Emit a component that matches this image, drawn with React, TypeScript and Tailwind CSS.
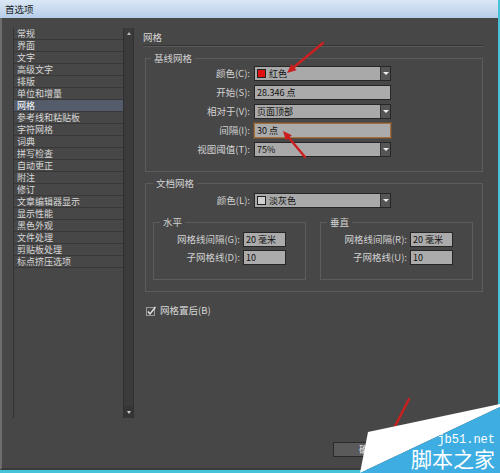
import type { ReactNode } from 'react';

// 左侧分类列表
const NAV_ITEMS = [
  '常规', '界面', '文字', '高级文字', '排版', '单位和增量', '网格',
  '参考线和粘贴板', '字符网格', '词典', '拼写检查', '自动更正', '附注', '修订',
  '文章编辑器显示', '显示性能', '黑色外观', '文件处理', '剪贴板处理', '标点挤压选项',
];
const ACTIVE = '网格';

// 下拉框
const Select = ({ children }: { children: ReactNode }) => (
  <div className="flex h-[15px] w-[137px] border border-[#262626] bg-[#a9a9a9]">
    <div className="flex flex-1 items-center gap-[3px] pl-[2px] text-[9px] leading-none text-[#111]">{children}</div>
    <div className="flex w-[10px] items-center justify-center border-l border-[#333] bg-[#555]">
      <span className="border-x-[3px] border-t-[3px] border-x-transparent border-t-[#eee]" />
    </div>
  </div>
);

// 文本输入框
const Input = ({ value, width = 'w-[137px]', focus = false }: { value: string; width?: string; focus?: boolean }) => (
  <div
    className={`flex h-[15px] ${width} items-center pl-[2px] text-[9px] leading-none text-[#111] ${
      focus ? 'border border-[#a07040] bg-[#ababab] shadow-[0_0_0_1px_#6b5038]' : 'border border-[#262626] bg-[#ababab]'
    }`}
  >
    {value}
  </div>
);

const Swatch = ({ color }: { color: string }) => (
  <span className={`inline-block h-[9px] w-[9px] border border-[#222] ${color}`} />
);

const Row = ({ label, children }: { label: string; children: ReactNode }) => (
  <div className="grid h-[15px] grid-cols-[104px_137px] items-center gap-x-[4px]">
    <span className="text-right text-[9.5px] leading-none text-[#d2d2d2]">{label}</span>
    {children}
  </div>
);

const SubRow = ({ label, value }: { label: string; value: string }) => (
  <div className="grid h-[15px] grid-cols-[86px_43px] items-center gap-x-[3px]">
    <span className="text-right text-[9.5px] leading-none text-[#d2d2d2]">{label}</span>
    <Input value={value} width="w-[43px]" />
  </div>
);

const SubBox = ({ title, rows }: { title: string; rows: [string, string][] }) => (
  <fieldset className="w-[153px] min-w-0 border border-[#5c5c5c]">
    <legend className="ml-[6px] px-[3px] text-[9.5px] leading-[12px] text-[#d2d2d2]">{title}</legend>
    <div className="flex flex-col gap-[3px] pb-[14px] pt-[4px]">
      {rows.map(([l, v]) => (
        <SubRow key={l} label={l} value={v} />
      ))}
    </div>
  </fieldset>
);

const NavList = () => (
  <div className="flex h-[390px] w-[121px] border-l border-[#333]">
    <ul className="w-[109px]">
      {NAV_ITEMS.map((name) => (
        <li
          key={name}
          className={`flex h-[12px] items-center border-b border-[#383838] pl-[3px] text-[9px] leading-none ${
            name === ACTIVE ? 'bg-[#545c6c] text-white' : 'text-[#d8d8d8]'
          }`}
        >
          {name}
        </li>
      ))}
    </ul>
    <div className="flex w-[11px] flex-col justify-between border-x border-[#303030] bg-[#3b3b3b]">
      <div className="flex h-[11px] items-center justify-center">
        <span className="border-x-[2.5px] border-b-[3px] border-x-transparent border-b-[#bbb]" />
      </div>
      <div className="flex h-[12px] items-center justify-center bg-[#353535]">
        <span className="border-x-[2.5px] border-t-[3px] border-x-transparent border-t-[#ccc]" />
      </div>
    </div>
  </div>
);

export default function App() {
  return (
    <div className="relative h-[473px] w-[500px] overflow-hidden bg-[#474747] font-['Noto_Sans_CJK_SC','Noto_Sans',sans-serif]">
      <div className="flex h-full w-full flex-col border-b-[3px] border-r-[2px] border-[#44c3da]">
        {/* 标题栏 */}
        <div className="h-[18px] shrink-0 bg-gradient-to-b from-[#dbe8f6] to-[#b6cde8] pl-[5px] text-[9.5px] leading-[18px] text-[#1d1d1d]">
          首选项
        </div>

        <div className="flex flex-1 border-b-2 border-l-2 border-b-[#3a3a3a] border-l-[#6e6e6e]">
          <div className="pl-[11px] pt-[10px]">
            <NavList />
          </div>

          <div className="ml-[9px] flex w-[340px] flex-col">
            <div className="mt-[11px] h-[17px] border-b border-[#353535] text-[9.5px] leading-[16px] text-[#d8d8d8] shadow-[0_1px_0_#5a5a5a]">
              网格
            </div>

            {/* 基线网格 */}
            <fieldset className="ml-[2px] mt-[6px] w-[338px] min-w-0 border border-[#5c5c5c]">
              <legend className="ml-[5px] px-[3px] text-[9.5px] leading-[12px] text-[#d2d2d2]">基线网格</legend>
              <div className="flex flex-col gap-[4px] pb-[14px] pt-[2px]">
                <Row label="颜色(C):">
                  <Select>
                    <Swatch color="bg-[#e01010]" />
                    <span>红色</span>
                  </Select>
                </Row>
                <Row label="开始(S):">
                  <Input value="28.346 点" />
                </Row>
                <Row label="相对于(V):">
                  <Select>页面顶部</Select>
                </Row>
                <Row label="间隔(I):">
                  <Input value="30 点" focus />
                </Row>
                <Row label="视图阈值(T):">
                  <Select>75%</Select>
                </Row>
              </div>
            </fieldset>

            {/* 文档网格 */}
            <fieldset className="ml-[2px] mt-[5px] w-[338px] min-w-0 border border-[#5c5c5c]">
              <legend className="ml-[7px] px-[3px] text-[9.5px] leading-[12px] text-[#d2d2d2]">文档网格</legend>
              <div className="pt-[4px]">
                <Row label="颜色(L):">
                  <Select>
                    <Swatch color="bg-[#d0d0d0]" />
                    <span>淡灰色</span>
                  </Select>
                </Row>
              </div>
              <div className="ml-[7px] mt-[8px] flex gap-[14px] pb-[11px]">
                <SubBox title="水平" rows={[['网格线间隔(G):', '20 毫米'], ['子网格线(D):', '10']]} />
                <SubBox title="垂直" rows={[['网格线间隔(R):', '20 毫米'], ['子网格线(U):', '10']]} />
              </div>
            </fieldset>

            <label className="ml-[3px] mt-[13px] flex h-[12px] items-center gap-[3px] text-[9.5px] leading-none text-[#d8d8d8]">
              <svg width="11" height="11" viewBox="0 0 11 11">
                <rect x="0.5" y="1.5" width="8" height="8" fill="#4a4a4a" stroke="#9a9a9a" />
                <path d="M2 5.5 L4 8 L9.5 1" fill="none" stroke="#e8e8e8" strokeWidth="1.3" />
              </svg>
              网格置后(B)
            </label>

            <div className="mb-[11px] ml-[190px] mt-auto flex">
              <button className="h-[15px] w-[71px] border border-[#2a2a2a] bg-[#5a5a5a] text-[9.5px] leading-none text-[#e6e6e6]">确定</button>
            </div>
          </div>
        </div>
      </div>

      {/* 标注箭头与水印 */}
      <svg className="pointer-events-none absolute inset-0" width="500" height="473" viewBox="0 0 500 473">
        <g stroke="#cc1f1f" strokeWidth="2.4" strokeLinecap="round" fill="#cc1f1f">
          <line x1="323" y1="43" x2="293" y2="68" />
          <polygon points="287,73 296.5,70.3 291.3,64.1" stroke="none" />
          <line x1="305" y1="157" x2="289" y2="138" />
          <polygon points="283,131 291.9,135.3 285.8,140.5" stroke="none" />
          <line x1="409" y1="399" x2="388" y2="440" />
        </g>
        <polygon points="368,432 500,404 500,407 360,473" fill="#ffffff" />
        <polygon points="360,473 500,407 500,473" fill="#3eaee2" />
      </svg>
      <div className="absolute right-[5px] top-[434px] font-['Liberation_Mono',monospace] text-[12px] leading-[12px] text-white">
        jb51.net
      </div>
      <div className="absolute right-[5px] top-[448px] text-[21px] leading-[21px] text-white">脚本之家</div>
    </div>
  );
}
